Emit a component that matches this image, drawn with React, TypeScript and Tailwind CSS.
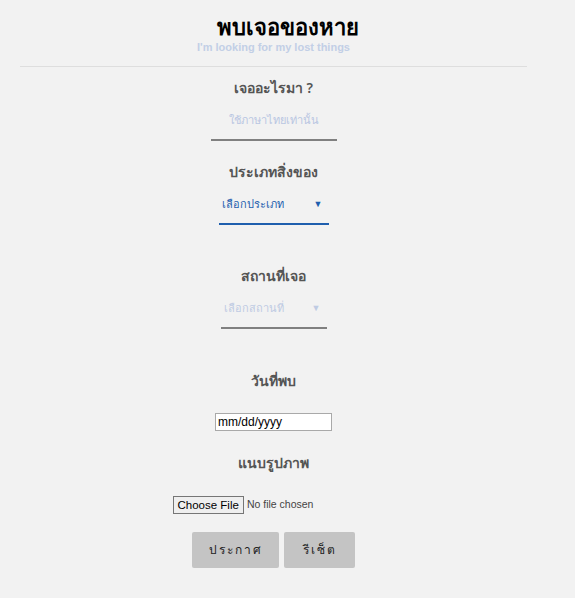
import * as React from 'react';

const Label = ({ children, className = '' }: { children: React.ReactNode; className?: string }) => (
  <div className={`text-[14px] font-semibold leading-5 text-[#555555] ${className}`}>{children}</div>
);

export default function App() {
  const [detail, setDetail] = React.useState('');

  return (
    <div className="min-h-[598px] w-full bg-[#f2f2f2] font-['Noto_Sans',sans-serif]">
      <header className="flex flex-col items-center pt-[13px]">
        <h1 className="text-[22px] font-bold leading-[26px] text-black">พบเจอของหาย</h1>
        <p className="mr-[28px] text-[11px] font-bold leading-4 text-[#c2cfe6] font-['Liberation_Sans',sans-serif]">
          I'm looking for my lost things
        </p>
      </header>
      <div className="mx-[20px] mt-[11px] w-[507px] border-t border-[#dedede]" />

      <form className="flex w-[547px] flex-col items-center" onSubmit={(e) => e.preventDefault()}>
        <Label className="mt-[11px]">เจออะไรมา ?</Label>
        <input
          value={detail}
          onChange={(e) => setDetail(e.target.value)}
          placeholder="ใช้ภาษาไทยเท่านั้น"
          className="mt-[10px] h-[33px] w-[126px] border-b-2 border-[#808080] bg-transparent pb-[8px] text-center text-[11px] outline-none placeholder:text-[#b9c6e2]"
        />

        <Label className="mt-[21px]">ประเภทสิ่งของ</Label>
        <div className="mt-[12px] flex h-[31px] w-[110px] items-start justify-between border-b-2 border-[#1f5fae] px-[3px] pt-[2px] text-[11px] text-[#1f5fae]">
          <span>เลือกประเภท</span>
          <span className="mr-[3px] text-[9px] leading-[16px]">▼</span>
        </div>

        <Label className="mt-[41px]">สถานที่เจอ</Label>
        <div className="mt-[12px] flex h-[31px] w-[106px] items-start justify-between border-b-2 border-[#808080] px-[3px] pt-[2px] text-[11px] text-[#bfcbe3]">
          <span>เลือกสถานที่</span>
          <span className="mr-[3px] text-[9px] leading-[16px]">▼</span>
        </div>

        <Label className="mt-[42px]">วันที่พบ</Label>
        <input
          readOnly
          value="mm/dd/yyyy"
          className="mt-[22px] h-[18px] w-[117px] border border-[#a9a9a9] bg-white px-[2px] font-['Liberation_Sans',sans-serif] text-[12px] text-black outline-none"
        />

        <Label className="mt-[22px]">แนบรูปภาพ</Label>
        <label className="mt-[23px] flex w-[202px] items-center font-['Liberation_Sans',sans-serif] text-[10.5px]">
          <span className="h-[18px] border border-[#767676] bg-[#efefef] px-[4px] text-[11.5px] leading-[16px] text-black">
            Choose File
          </span>
          <span className="ml-[3px] text-[#444444]">No file chosen</span>
        </label>

        <div className="mt-[18px] flex gap-[5px]">
          <button
            type="submit"
            className="h-[36px] w-[87px] rounded-[2px] bg-[#c4c4c4] text-[12px] tracking-[2px] text-[#222222]"
          >
            ประกาศ
          </button>
          <button
            type="reset"
            onClick={() => setDetail('')}
            className="h-[36px] w-[71px] rounded-[2px] bg-[#c4c4c4] text-[12px] tracking-[2px] text-[#222222]"
          >
            รีเซ็ต
          </button>
        </div>
      </form>
    </div>
  );
}
